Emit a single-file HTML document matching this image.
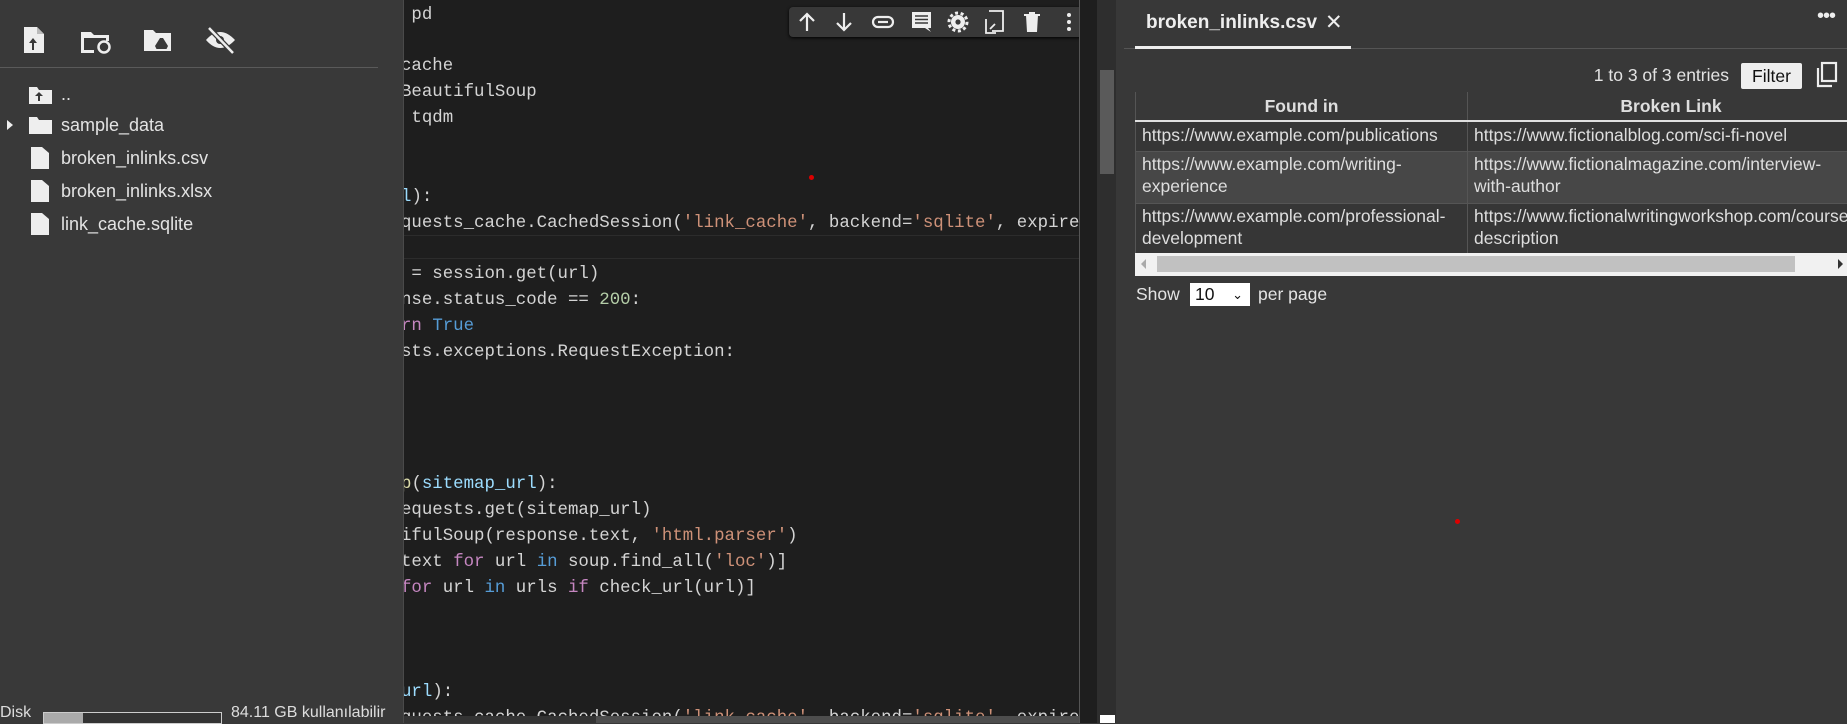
<!DOCTYPE html>
<html><head><meta charset="utf-8">
<style>
*{margin:0;padding:0;box-sizing:border-box}
body{width:1847px;height:723px;overflow:hidden;background:#383838;position:relative;font-family:"Liberation Sans",Arial,sans-serif;color:#e3e3e3}
.abs{position:absolute}
#side{left:0;top:0;width:403px;height:723px;background:#393939}
.f{position:absolute;left:61px;font-size:18px;color:#e3e3e3;white-space:nowrap}
#code{left:403px;top:0;width:676px;height:723px;background:#1e1e1e;border-left:1px solid #4a4a4a;overflow:hidden}
.ln{position:absolute;left:-3px;font-family:"Liberation Mono",monospace;font-size:17.4px;color:#d4d4d4;white-space:pre;line-height:26px;height:26px}
.s{color:#ce9178}.k{color:#c586c0}.b{color:#569cd6}.n{color:#b5cea8}.v{color:#9cdcfe}.fn{color:#dcdcaa}
#right{left:1117px;top:0;width:730px;height:723px;background:#383838}
table{border-collapse:collapse;font-size:17.5px;color:#dedede}
td,th{border:1px solid #555;padding:0 6px;line-height:22px;text-align:left;vertical-align:top;white-space:nowrap;overflow:hidden}
td{padding-top:1px}
th{text-align:center;font-weight:bold;height:27px;line-height:28px;border-top:none;border-bottom:2px solid #e0e0e0}
</style></head><body>
<div id="side" class="abs">
  <svg class="abs" style="left:0;top:0" width="260" height="66" viewBox="0 0 260 66">
    <path d="M24 27h13l7 7v19H24z" fill="#eee"/><path d="M37 27v7h7" fill="#bbb"/>
    <path d="M34 50v-7h3l-4-5-4 5h3v7z" fill="#393939"/>
    <path d="M81 32h10l3 3h15v6h-3v-3H84v12h10v3H81z" fill="#eee"/>
    <circle cx="104" cy="47" r="5.5" fill="none" stroke="#eee" stroke-width="2.5"/>
    <path d="M144 30h9l3 3h15v18h-27z" fill="#eee"/>
    <path d="M155 46l5-8h3l5 8l-1.5 3h-10z" fill="#393939"/>
    <path d="M206 40q14-16 29 0q-15 16-29 0z" fill="#eee"/><circle cx="220" cy="40" r="4" fill="#393939"/>
    <path d="M209 28l24 25" stroke="#393939" stroke-width="5"/><path d="M209 28l24 25" stroke="#eee" stroke-width="2.5"/>
  </svg>
  <div class="abs" style="left:0;top:67px;width:378px;height:1px;background:#5a5a5a"></div>
  <svg class="abs" style="left:0;top:80px" width="60" height="160">
    <path d="M29 7h8l2 3h13v14H29z" fill="#eee"/><path d="M40 21v-5h3l-4-4-4 4h3v5z" fill="#393939"/>
    <path d="M7 40l6 5-6 5z" fill="#eee"/>
    <path d="M29 37h8l2 3h13v14H29z" fill="#eee"/>
    <path d="M31 67h11l7 6v16H31z" fill="#eee"/>
    <path d="M31 100h11l7 6v16H31z" fill="#eee"/>
    <path d="M31 133h11l7 6v16H31z" fill="#eee"/>
  </svg>
  <div class="f" style="top:84px">..</div>
  <div class="f" style="top:115px">sample_data</div>
  <div class="f" style="top:148px">broken_inlinks.csv</div>
  <div class="f" style="top:181px">broken_inlinks.xlsx</div>
  <div class="f" style="top:214px">link_cache.sqlite</div>
  <div class="abs" style="left:0;top:704px;font-size:16px;color:#ddd">Disk</div>
  <div class="abs" style="left:43px;top:712px;width:179px;height:12px;border:1px solid #ccc;background:#333"><div style="width:39px;height:10px;background:#aaa"></div></div>
  <div class="abs" style="left:231px;top:704px;font-size:16px;color:#ddd;white-space:nowrap">84.11 GB kullanılabilir</div>
</div>
<div id="code" class="abs">
  <div class="abs" style="left:0;top:235px;width:676px;height:1px;background:#2c2c2c"></div>
  <div class="abs" style="left:0;top:258px;width:676px;height:1px;background:#2c2c2c"></div>
  <div class="ln" style="top:3px"> pd</div>
  <div class="ln" style="top:54px">cache</div>
  <div class="ln" style="top:80px">BeautifulSoup</div>
  <div class="ln" style="top:106px"> tqdm</div>
  <div class="ln" style="top:185px"><span class="v">l</span>):</div>
  <div class="ln" style="top:211px">quests_cache.CachedSession(<span class="s">'link_cache'</span>, backend=<span class="s">'sqlite'</span>, expire</div>
  <div class="ln" style="top:262px"> = session.get(url)</div>
  <div class="ln" style="top:288px">nse.status_code == <span class="n">200</span>:</div>
  <div class="ln" style="top:314px"><span class="k">rn</span> <span class="b">True</span></div>
  <div class="ln" style="top:340px">sts.exceptions.RequestException:</div>
  <div class="ln" style="top:472px"><span class="fn">p</span>(<span class="v">sitemap_url</span>):</div>
  <div class="ln" style="top:498px">equests.get(sitemap_url)</div>
  <div class="ln" style="top:524px">ifulSoup(response.text, <span class="s">'html.parser'</span>)</div>
  <div class="ln" style="top:550px">text <span class="k">for</span> url <span class="b">in</span> soup.find_all(<span class="s">'loc'</span>)]</div>
  <div class="ln" style="top:576px"><span class="k">for</span> url <span class="b">in</span> urls <span class="k">if</span> check_url(url)]</div>
  <div class="ln" style="top:680px"><span class="v">url</span>):</div>
  <div class="ln" style="top:706px">quests_cache.CachedSession(<span class="s">'link_cache'</span>, backend=<span class="s">'sqlite'</span>, expire</div>
  <div class="abs" style="left:405px;top:175px;width:5px;height:5px;border-radius:50%;background:#d00"></div>
  <div class="abs" style="left:385px;top:7px;width:295px;height:30px;background:#383838;border-radius:4px;box-shadow:0 1px 3px #000"></div>
  <svg class="abs" style="left:385px;top:7px" width="295" height="30">
    <g stroke="#eee" stroke-width="2.2" fill="none">
      <path d="M18 24V7M11 14l7-7 7 7"/><path d="M55 6v17M48 16l7 7 7-7"/>
      <rect x="84" y="10" width="20" height="10" rx="5"/><path d="M89 15h10"/>
    </g>
    <path d="M123 5h19v16h-3l3 4-6-4h-13z" fill="#eee"/><path d="M126 9h13M126 12.5h13M126 16h13" stroke="#383838" stroke-width="1.6"/>
    <circle cx="169" cy="15" r="7" fill="#eee"/><circle cx="169" cy="15" r="9" fill="none" stroke="#eee" stroke-width="3" stroke-dasharray="3 2.6"/><circle cx="169" cy="15" r="2.6" fill="#383838"/>
    <path d="M200 4h14v20h-11M197 12v14h10" stroke="#eee" stroke-width="1.8" fill="none"/><path d="M201 22l5-5" stroke="#eee" stroke-width="1.8"/>
    <path d="M237 8h12l-1 17h-10z M240 5h6v3h-6z M235 7h16v2h-16z" fill="#eee"/>
    <circle cx="280" cy="8" r="2" fill="#eee"/><circle cx="280" cy="15" r="2" fill="#eee"/><circle cx="280" cy="22" r="2" fill="#eee"/>
  </svg>
  <div class="abs" style="left:0;top:716px;width:676px;height:7px;background:#333"><div style="margin-left:192px;width:484px;height:7px;background:#4d4d4d"></div></div>
</div>
<div class="abs" style="left:1079px;top:0;width:1px;height:723px;background:#555"></div>
<div class="abs" style="left:1080px;top:0;width:17px;height:723px;background:#1e1e1e"></div>
<div class="abs" style="left:1097px;top:0;width:19px;height:723px;background:#2e2e2e"></div>
<div class="abs" style="left:1100px;top:70px;width:14px;height:104px;background:#5a5a5a"></div>
<div class="abs" style="left:1100px;top:715px;width:15px;height:8px;background:#fff"></div>
<div id="right" class="abs">
  <div class="abs" style="left:29px;top:12px;font-size:19px;font-weight:bold;color:#eee">broken_inlinks.csv</div>
  <div class="abs" style="left:208px;top:10px;font-size:21px;color:#eee">✕</div>
  <div class="abs" style="left:700px;top:5px;font-size:20px;color:#eee;letter-spacing:-1px">•••</div>
  <div class="abs" style="left:7px;top:48px;width:723px;height:1px;background:#555"></div>
  <div class="abs" style="left:18px;top:46px;width:216px;height:3px;background:#eee"></div>
  <div class="abs" style="right:118px;top:65px;font-size:17.5px;color:#e3e3e3">1 to 3 of 3 entries</div>
  <div class="abs" style="left:624px;top:63px;width:61px;height:26px;background:#eee;border-radius:2px;color:#111;font-size:17.5px;text-align:center;line-height:26px">Filter</div>
  <svg class="abs" style="left:697px;top:60px" width="26" height="30"><rect x="8" y="3" width="14" height="18" fill="none" stroke="#eee" stroke-width="2.2"/><path d="M4 8v18h14" fill="none" stroke="#eee" stroke-width="2.2"/></svg>
  <div class="abs" style="left:18px;top:92px;width:712px;height:184px;overflow:hidden">
    <table style="width:740px">
      <tr><th style="width:332px;border-left:1px solid #555">Found in</th><th>Broken Link</th></tr>
      <tr style="background:#363636;height:30px"><td style="line-height:27px;padding-top:0">https://www.example.com/publications</td><td style="line-height:27px;padding-top:0">https://www.fictionalblog.com/sci-fi-novel</td></tr>
      <tr style="background:#474747;height:52px"><td>https://www.example.com/writing-<br>experience</td><td>https://www.fictionalmagazine.com/interview-<br>with-author</td></tr>
      <tr style="background:#363636;height:51px"><td>https://www.example.com/professional-<br>development</td><td>https://www.fictionalwritingworkshop.com/course-<br>description</td></tr>
    </table>
    <div class="abs" style="left:0;top:161px;width:712px;height:23px;background:#f1f1f1">
      <div class="abs" style="left:22px;top:3px;width:638px;height:16px;background:#c1c1c1"></div>
      <div class="abs" style="left:6px;top:6px;width:0;height:0;border:5px solid transparent;border-right-color:#aaa;border-left:none"></div>
      <div class="abs" style="left:703px;top:6px;width:0;height:0;border:5px solid transparent;border-left-color:#333;border-right:none"></div>
    </div>
  </div>
  <div class="abs" style="left:19px;top:284px;font-size:17.5px;color:#e3e3e3">Show</div>
  <div class="abs" style="left:73px;top:283px;width:60px;height:23px;background:#fff;color:#111;font-size:17.5px;line-height:23px;padding-left:5px">10 <span style="font-size:13px;position:absolute;right:7px">&#8964;</span></div>
  <div class="abs" style="left:141px;top:284px;font-size:17.5px;color:#e3e3e3">per page</div>
  <div class="abs" style="left:338px;top:519px;width:5px;height:5px;border-radius:50%;background:#d00"></div>
</div>
</body></html>
